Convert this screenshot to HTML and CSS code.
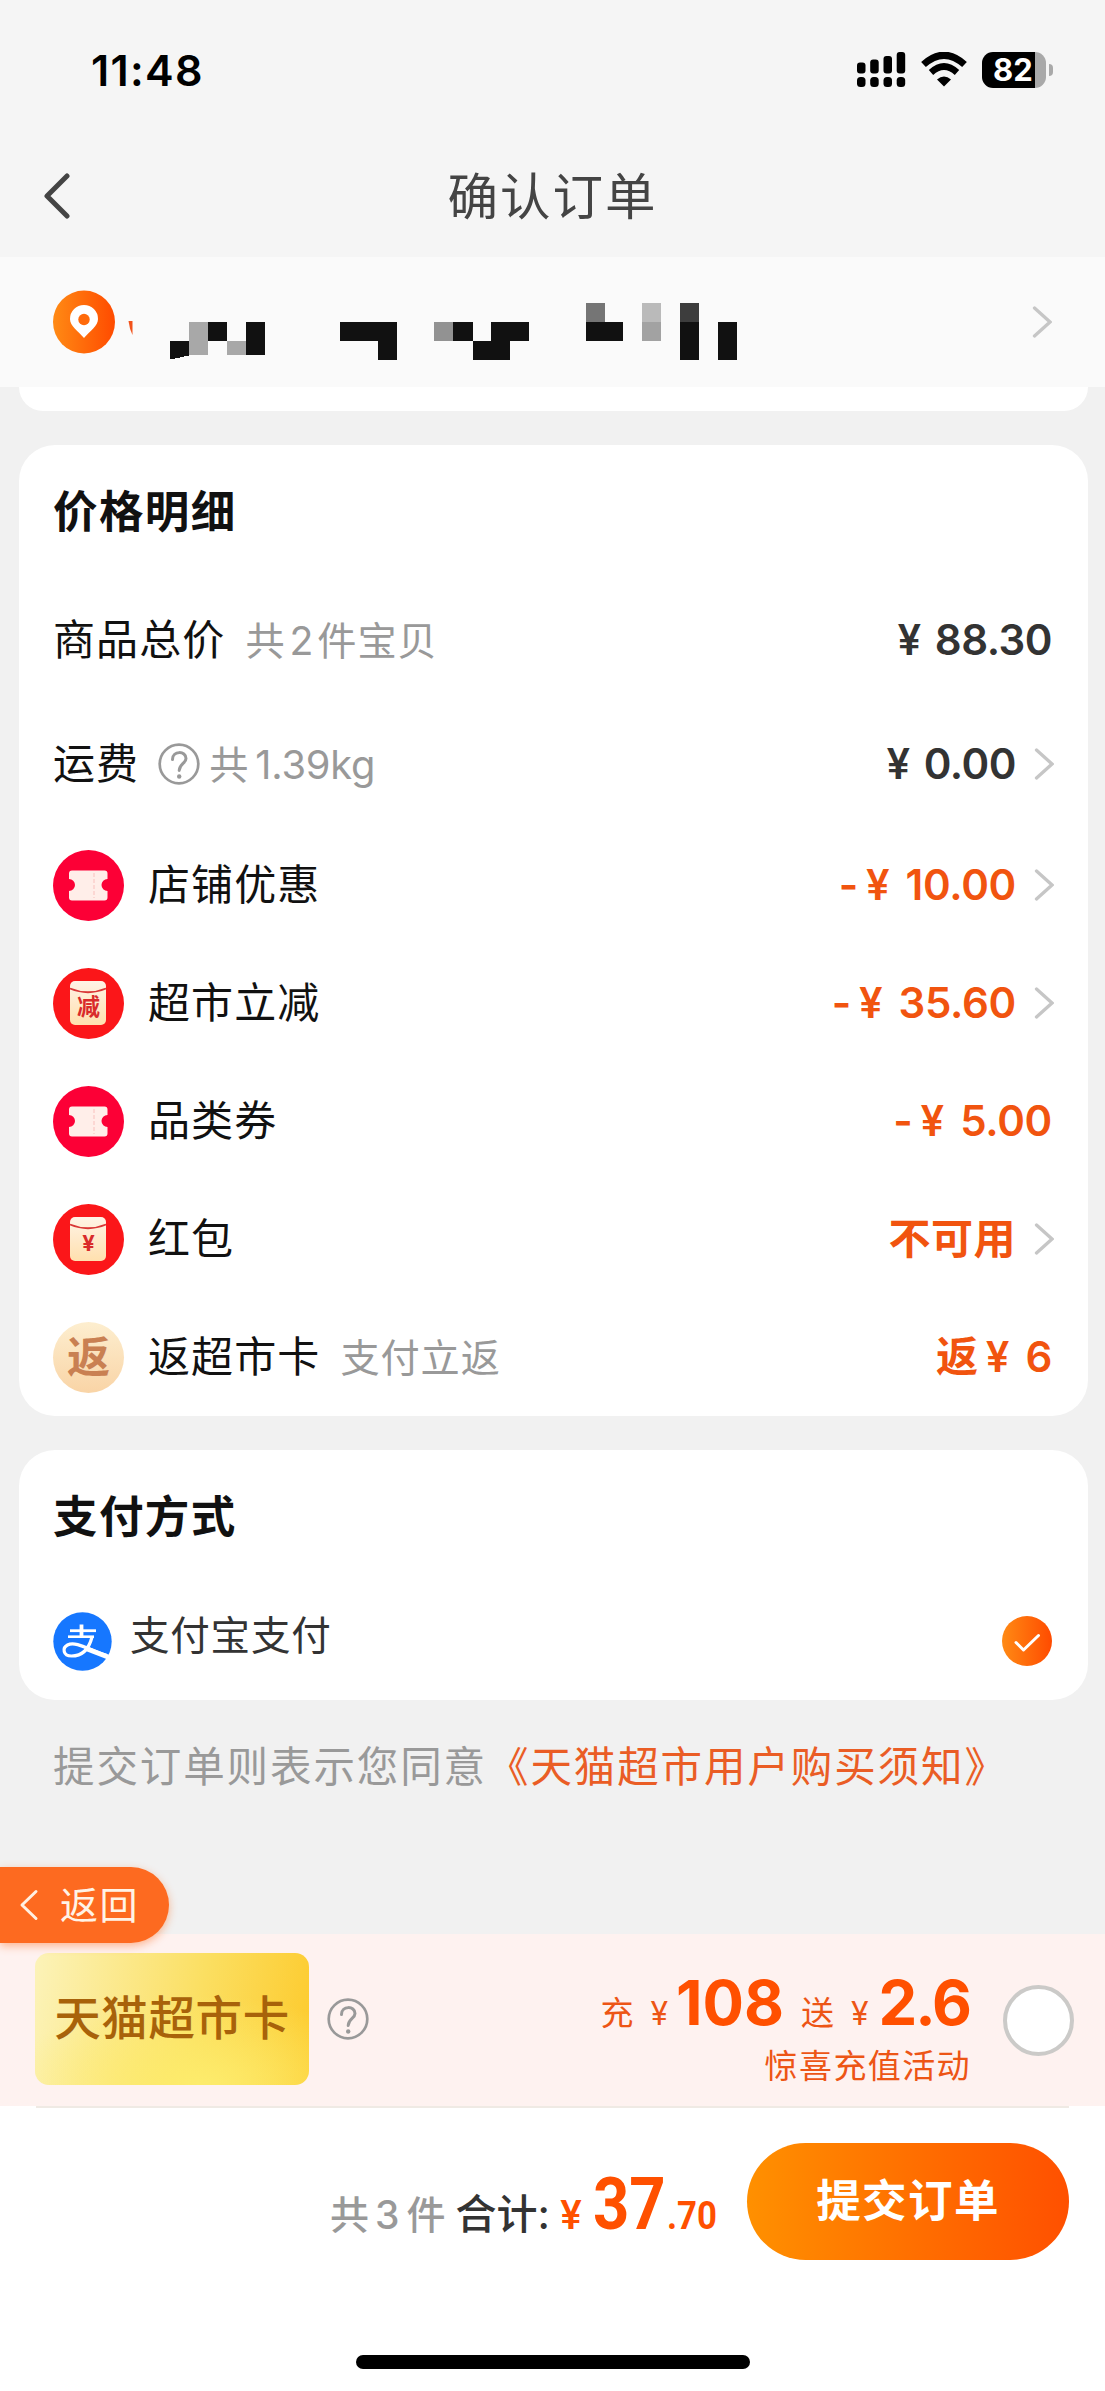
FILE: index.html
```html
<!DOCTYPE html>
<html lang="zh-CN">
<head>
<meta charset="utf-8">
<title>确认订单</title>
<link rel="stylesheet" href="styles.css">
</head>
<body>
<svg class="defs" width="0" height="0">
  <defs>
    <linearGradient id="orange" x1="0" y1="0" x2="1" y2="0"><stop offset="0" stop-color="#ff8a14"/><stop offset="1" stop-color="#ff4b00"/></linearGradient>
    <linearGradient id="cream" x1="0" y1="0" x2="0" y2="1"><stop offset="0" stop-color="#fff3e6"/><stop offset="1" stop-color="#ffe0ae"/></linearGradient>
    <symbol id="chevron" viewBox="0 0 20 32"><path d="M2.500 2 L18 16 L2.500 30" fill="none" stroke="#c6c6c6" stroke-width="3.300" stroke-linecap="round"/></symbol>
    <symbol id="help" viewBox="0 0 42 42"><circle cx="21" cy="21" r="19.3" fill="none" stroke="#999" stroke-width="2.7"/><path d="M14.5 16.5 C14.5 7.5 28 7.5 28 15.5 C28 20.5 21.5 20.5 21.2 27.5" fill="none" stroke="#999" stroke-width="3" stroke-linecap="round"/><circle cx="21.2" cy="33.5" r="2.200" fill="#999"/></symbol>
    <symbol id="ticket" viewBox="0 0 71 71"><circle cx="35.5" cy="35.5" r="35.5" fill="#fc0036"/><path d="M19 20.500 H51.500 Q54.500 20.500 54.500 23.500 V29 A6 6 0 0 0 54.500 41 V47.500 Q54.500 50.500 51.500 50.500 H19 Q16 50.500 16 47.500 V41 A6 6 0 0 0 16 29 V23.500 Q16 20.500 19 20.500Z" fill="#ffeee9"/><path d="M41 23 V48" stroke="#fbd0cb" stroke-width="1.500" stroke-dasharray="4 2"/></symbol>
    <symbol id="packet" viewBox="0 0 71 71"><circle cx="35.5" cy="35.5" r="35.5" fill="#fb1619"/><rect x="17" y="13" width="36" height="44" rx="5" fill="url(#cream)"/><path d="M17 20.500 Q35 28 53 20.500" fill="none" stroke="#d93636" stroke-width="1.800"/></symbol>
  </defs>
</svg>
<header class="top">
  <div class="status">
    <span class="time">11:48</span>
    <div class="status-icons">
      <svg width="49" height="36" viewBox="0 0 49 36"><rect x="0" y="10.500" width="8.500" height="11" rx="3"/><rect x="13.200" y="7.500" width="8.500" height="14" rx="3"/><rect x="26.500" y="4" width="8.500" height="17.500" rx="3"/><rect x="39.700" y="0" width="8.500" height="21.500" rx="3"/><rect x="0" y="25" width="8.500" height="10" rx="3.500"/><rect x="13.200" y="25" width="8.500" height="10" rx="3.500"/><rect x="26.500" y="25" width="8.500" height="10" rx="3.500"/><rect x="39.700" y="25" width="8.500" height="10" rx="3.500"/></svg>
      <svg class="wifi" width="46" height="36" viewBox="0 0 46 36"><path d="M2.500 12.500 Q23 -6 43.500 12.500" fill="none" stroke="#000" stroke-width="7"/><path d="M10 20.500 Q23 8.500 36 20.500" fill="none" stroke="#000" stroke-width="6.500"/><path d="M23 34.500 L16 27.500 Q23 21.500 30 27.500Z"/></svg>
      <div class="battery"><span class="battery-level">82</span></div>
      <span class="battery-nub"></span>
    </div>
  </div>
  <div class="nav">
    <svg class="nav-back" width="29" height="46" viewBox="0 0 29 46"><path d="M25 3 L5 23 L25 43" fill="none" stroke="#444" stroke-width="5" stroke-linecap="round" stroke-linejoin="round"/></svg>
    <h1>确认订单</h1>
  </div>
</header>
<section class="address">
  <svg width="62" height="64" viewBox="0 0 62 64"><ellipse cx="31" cy="32" rx="31" ry="31.500" fill="url(#orange)"/><path d="M31 48 C25 41 17 36 17 29 A13.800 13.800 0 0 1 45 29 C45 36 37 41 31 48Z" fill="#fff"/><circle cx="31" cy="29.500" r="5.700" fill="#ff6a0a"/></svg>
  <svg class="mosaic" width="620" height="64" viewBox="128 289 620 64" shape-rendering="crispEdges">
    <path d="M128.500 320 H132.500 V334 Q129.500 328 128.500 320Z" fill="#f2521a" shape-rendering="auto"/>
    <g fill="#111">
      <path d="M170 340 H189 V354.500 L170 358.500Z"/>
      <path d="M208 321 H227 V340 H208Z"/><path d="M245.500 321 H264.500 V354 H245.500Z"/>
      <path d="M340 321 H396.500 V359 H377.500 V340 H340Z"/>
      <path d="M453 321 H472.500 V340 H491 V321 H529 V340 H510 V359 H472.500 V340 H453Z"/>
      <path d="M586 321 H623 V340 H586Z"/><path d="M680 321 H699 V359 H680Z"/><path d="M718 321 H737 V359 H718Z"/>
    </g>
    <path d="M189 321 H208 V354 H189Z M227 340 H245.500 V354 H227Z" fill="#a8a8a8"/>
    <path d="M434 321 H453 V340 H434Z" fill="#929292"/><path d="M586 302 H604.500 V321 H586Z" fill="#757575"/>
    <path d="M642 302 H661 V321 H642Z" fill="#bababa"/><path d="M642 321 H661 V340 H642Z" fill="#a2a2a2"/><path d="M680 302 H699 V321 H680Z" fill="#3d3d3d"/>
  </svg>
  <svg class="go" width="20" height="32"><use href="#chevron"/></svg>
</section>
<main>
  <div class="card card-tail"></div>
  <section class="card prices">
    <h2>价格明细</h2>
    <div class="row row-total"><span class="label">商品总价</span><span class="hint count">共<i>2</i>件宝贝</span><span class="value plain">¥ 88.30</span></div>
    <div class="row row-ship"><span class="label">运费</span><svg class="help" width="42" height="42"><use href="#help"/></svg><span class="hint kg">共<i>1.39kg</i></span><span class="value plain">¥ 0.00</span><svg class="go" width="20" height="32"><use href="#chevron"/></svg></div>
    <div class="row"><span class="badge"><svg width="71" height="71"><use href="#ticket"/></svg></span><span class="label">店铺优惠</span><span class="value"><span class="minus">-</span>¥ 10.00</span><svg class="go" width="20" height="32"><use href="#chevron"/></svg></div>
    <div class="row"><span class="badge"><svg width="71" height="71"><use href="#packet"/></svg><b class="badge-cut">减</b></span><span class="label">超市立减</span><span class="value"><span class="minus">-</span>¥ 35.60</span><svg class="go" width="20" height="32"><use href="#chevron"/></svg></div>
    <div class="row"><span class="badge"><svg width="71" height="71"><use href="#ticket"/></svg></span><span class="label">品类券</span><span class="value"><span class="minus">-</span>¥ 5.00</span></div>
    <div class="row"><span class="badge"><svg width="71" height="71"><use href="#packet"/></svg><b class="badge-yen">¥</b></span><span class="label">红包</span><span class="value cjk">不可用</span><svg class="go" width="20" height="32"><use href="#chevron"/></svg></div>
    <div class="row"><span class="badge badge-return">返</span><span class="label">返超市卡</span><span class="hint">支付立返</span><span class="value"><span class="minus">返</span>¥ 6</span></div>
  </section>
  <section class="card payment">
    <h2>支付方式</h2>
    <div class="pay-row">
      <svg width="59" height="59" viewBox="0 0 59 59"><circle cx="29.500" cy="29.500" r="29.200" fill="#1677ff"/><g fill="none" stroke="#fff"><path d="M17 18.700 H43" stroke-width="2.800"/><path d="M15 24.700 H41" stroke-width="2.600"/><path d="M28.500 12.500 V25" stroke-width="3.800"/><path d="M39 25 C37 33 32 44 18.500 44 C10 44 9 36 14.500 33 C23 28.500 37 38.500 54 43.500" stroke-width="3.200"/><path d="M33 36.500 L55 45" stroke-width="5"/></g></svg>
      <span class="pay-name">支付宝支付</span>
      <svg class="check" width="50" height="50" viewBox="0 0 50 50"><circle cx="25" cy="25" r="25" fill="url(#orange)"/><path d="M14 26.500 L21.500 34 L36.500 19.500" fill="none" stroke="#fff" stroke-width="3" stroke-linecap="round" stroke-linejoin="round"/></svg>
    </div>
  </section>
  <p class="terms">提交订单则表示您同意<a>《天猫超市用户购买须知》</a></p>
</main>
<a class="float-back"><svg width="21" height="32" viewBox="0 0 21 32"><path d="M18 2.500 L4 16 L18 29.500" fill="none" stroke="#fff0e2" stroke-width="3" stroke-linecap="round" stroke-linejoin="round"/></svg>返回</a>
<section class="promo">
  <div class="gift-card">天猫超市卡</div>
  <svg class="promo-help" width="42" height="42"><use href="#help"/></svg>
  <div class="promo-text">
    <div class="promo-line"><span>充</span><span class="yen">¥</span><b>108</b><span class="give">送</span><span class="yen">¥</span><b class="bonus">2.6</b></div>
    <div class="promo-note">惊喜充值活动</div>
  </div>
  <span class="radio"></span>
</section>
<footer class="checkout">
  <div class="summary">
    <span class="pieces">共<i>3</i>件</span><span class="sum-label">合计:</span><span class="sum-yen">¥</span><span class="sum-int">37</span><span class="sum-dec">.70</span>
  </div>
  <button class="submit">提交订单</button>
</footer>
<div class="home"></div>
</body>
</html>
```
FILE: styles.css
```css
* { box-sizing: border-box; }
body {
  margin: 0;
  width: 1105px;
  height: 2391px;
  overflow: hidden;
  background: #f1f1f1;
  color: #111;
  font: 42px/1 Inter, "Noto Sans CJK SC", sans-serif;
  display: flex;
  flex-direction: column;
}
svg { display: block; flex: none; }
.defs { position: absolute; }
h1, h2, p { margin: 0; }
i { font-style: normal; }
span, b { white-space: nowrap; }

.top { height: 257px; background: #f5f5f5; }
.status { height: 140px; display: flex; align-items: center; padding: 0 52px 0 91px; }
.time { font-size: 43px; font-weight: 600; color: #000; letter-spacing: 1.3px; }
.status-icons { margin-left: auto; display: flex; align-items: center; }
.wifi { margin-left: 15.5px; }
.battery {
  width: 64px; height: 36px; margin-left: 15px;
  border-radius: 11px; overflow: hidden;
  background: linear-gradient(90deg, #000 53px, #a9a9a9 53px);
}
.battery-level {
  display: block; padding-left: 11px;
  color: #fff; font-size: 31px; font-weight: 700; line-height: 36px;
}
.battery-nub { width: 4px; height: 12px; margin-left: 3px; border-radius: 0 4px 4px 0; background: #a9a9a9; }
.nav { height: 112px; display: grid; grid-template-columns: 1fr auto 1fr; align-items: center; }
.nav-back { margin-left: 42px; }
h1 { font-size: 50.5px; font-weight: 400; letter-spacing: 2px; color: #444; padding-top: 2px; }

.address { height: 130px; display: flex; align-items: center; padding: 0 53px; background: #fafafa; }
.mosaic { margin-left: 13px; overflow: visible; }
.address .go { margin-left: auto; }

main { padding: 0 17px 0 19px; }
.card { border-radius: 36px; background: #fff; padding: 0 36px 0 34px; }
.card-tail { height: 24px; border-radius: 0 0 34px 34px; }
.prices { height: 971px; margin-top: 34px; padding-top: 45px; }
h2 { font-size: 44.5px; font-weight: 600; letter-spacing: 1.4px; line-height: 44px; color: #111; }
.row { height: 118px; display: flex; align-items: center; }
.row-total { height: 124px; margin-top: 44px; }
.row-ship { height: 124px; }
.label { letter-spacing: 1.1px; }
.badge + .label { margin-left: 24px; }
.hint { color: #999; font-size: 39.2px; letter-spacing: .9px; margin: 1px 0 0 20px; }
.count i { margin: 0 3px 0 4px; }
.kg { margin-left: 9px; }
.kg i { margin-left: 6px; font-size: 39.8px; letter-spacing: -.2px; }
.help { margin-left: 19px; }
.value { margin-left: auto; color: #f1540f; font-weight: 600; font-size: 42px; word-spacing: 6px; letter-spacing: -.3px; }
.plain { color: #333; word-spacing: 4px; letter-spacing: -.5px; }
.minus { margin-right: 8px; }
.cjk { letter-spacing: .5px; }
.row .go { margin: 0 -2px 0 18px; }
.badge { position: relative; width: 71px; height: 71px; flex: none; }
.badge b { position: absolute; inset: 0; text-align: center; color: #d92b2b; }
.badge-cut { font-size: 23px; line-height: 79px; }
.badge-yen { font-size: 22px; line-height: 78px; }
.badge-return {
  border-radius: 50%; text-align: center; line-height: 71px;
  font-size: 43px; font-weight: 700; color: #c98052;
  background: linear-gradient(#fdeecf, #f9d4a6);
}

.payment { height: 250px; margin-top: 34px; padding-top: 45px; }
.pay-row { height: 58px; display: flex; align-items: center; margin-top: 73px; }
.pay-name { margin: -9px 0 0 18px; font-size: 39.5px; letter-spacing: .8px; color: #333; }
.check { margin-left: auto; }
.terms { padding: 45px 34px 0; font-size: 41.5px; line-height: 44px; letter-spacing: 1.9px; color: #999; white-space: nowrap; }
.terms a { color: #ea5d25; }

.float-back {
  position: absolute; left: 0; top: 1867px; width: 169px; height: 76px;
  display: flex; align-items: center; gap: 21px; padding-left: 18px;
  border-radius: 0 38px 38px 0; background: #fd6a20; color: #fff3e6;
  font-size: 38px; letter-spacing: 1.5px; box-shadow: 0 3px 8px rgba(253, 106, 32, .45);
}
.promo {
  height: 172px; margin-top: 145px; padding: 0 31px 0 35px;
  display: flex; align-items: center; background: #fef2f0;
}
.gift-card {
  width: 274px; height: 132px; border-radius: 14px; margin-top: -2px;
  font-size: 46.5px; line-height: 130px; text-align: center; font-weight: 500; letter-spacing: .6px; color: #a8620a;
  background: radial-gradient(ellipse 190px 90px at 60% 100%, #fdec6c, rgba(253, 236, 108, 0)), linear-gradient(100deg, #fcf3b9, #fbdf62 58%, #fdca2c);
}
.promo-help { margin: -2px 0 0 18px; }
.promo-text { margin-left: auto; color: #ed5515; text-align: right; padding-top: 15px; }
.promo-line { display: flex; align-items: baseline; font-size: 33px; line-height: 62px; }
.promo-line b { font-size: 61.5px; font-weight: 650; color: #ff5000; margin-left: 8px; }
.promo-line .yen { margin-left: 17px; font-size: 32px; }
.promo-line .give { margin-left: 17px; }
.promo-line .bonus { letter-spacing: -2px; margin-left: 10px; }
.promo-note { font-size: 33px; letter-spacing: 1.4px; margin: 5px -1px 0 0; }
.radio { width: 71px; height: 71px; margin-left: 33px; border: 4px solid #cbcac8; border-radius: 50%; background: #fff; }

.checkout { height: 249px; background: #fff; display: flex; padding: 37px 36px 0 330px; position: relative; }
.checkout::before { content: ""; position: absolute; left: 36px; right: 36px; top: 0; height: 2px; background: #efeae4; }
.summary { display: flex; align-items: baseline; height: 117px; line-height: 124px; }
.pieces { font-size: 39px; color: #999; font-weight: 500; }
.pieces i { margin: 0 7px 0 6px; }
.sum-label { margin-left: 10px; font-size: 41px; font-weight: 500; color: #333; }
.sum-yen { margin-left: 10px; width: 33px; font-size: 39px; font-weight: 600; color: #ff5000; }
.sum-int, .sum-dec { font-family: Roboto, sans-serif; font-weight: 700; color: #ff5000; transform: scaleX(.88); transform-origin: 0 0; }
.sum-int { width: 74px; font-size: 72px; }
.sum-dec { width: 48px; font-size: 39.5px; }
.submit {
  width: 322px; height: 117px; margin-left: auto; padding: 0; border: 0; border-radius: 59px;
  background: linear-gradient(90deg, #ff9000, #ff5000);
  color: #fff; font: 600 44.5px/1 Inter, "Noto Sans CJK SC", sans-serif; letter-spacing: 1.4px;
}
.home { flex: 1; background: #fff; }
.home::before { content: ""; display: block; width: 394px; height: 14px; border-radius: 7px; margin-left: 356px; background: #000; }
```
